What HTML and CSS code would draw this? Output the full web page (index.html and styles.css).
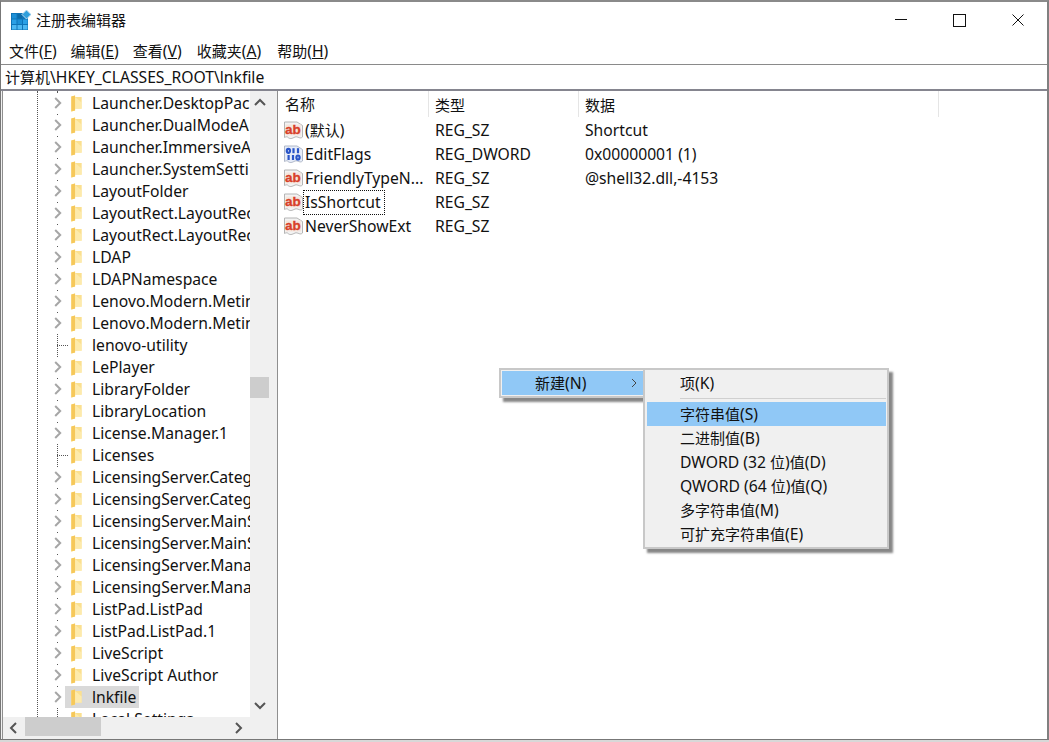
FILE: index.html
```html
<!DOCTYPE html>
<html lang="zh-CN">
<head>
<meta charset="utf-8">
<title>注册表编辑器</title>
<link rel="stylesheet" href="styles.css">
</head>
<body>
<svg class="defs" width="0" height="0">
  <defs>
    <symbol id="folder" viewBox="0 0 13 18">
      <path d="M1 1.5 L5 0.5 L5 2 L12 2 L12 14.5 L5 14.5 L5 16.5 L1 17.5 Z" fill="#fbe08f"/>
      <path d="M1 1.5 L5 0.5 L5 16.5 L1 17.5 Z" fill="#f6c85a"/>
      <path d="M5 2 L5 14.5 L12 14.5 L12 8 Z" fill="#fdeeb8" opacity=".7"/>
    </symbol>
    <symbol id="chev" viewBox="0 0 8 12">
      <path d="M1.2 1 L6.2 6 L1.2 11" fill="none" stroke="#a6a6a6" stroke-width="2"/>
    </symbol>
    <symbol id="ab" viewBox="0 0 19 19">
      <path d="M0.5 1 H13 L18.5 4.5 V16 C16 18.5 14 15 11 16 C8 17.5 6 18.5 3.5 16 C2.5 15.5 1.5 16 0.5 16.5 Z" fill="#f3f3f3" stroke="#b5b5b5"/>
      <rect x="1.5" y="3.5" width="15.5" height="11" fill="#f5e6de"/>
      <text x="9" y="12.5" class="ab-text">ab</text>
    </symbol>
    <symbol id="bin" viewBox="0 0 19 19">
      <path d="M0.5 1 H13 L18.5 4.5 V16 C16 18.5 14 15 11 16 C8 17.5 6 18.5 3.5 16 C2.5 15.5 1.5 16 0.5 16.5 Z" fill="#e6ecf8" stroke="#b0b8c8"/>
      <g fill="none" stroke="#2a55c8" stroke-width="2.2">
        <ellipse cx="4.4" cy="5.8" rx="1.6" ry="2"/>
        <path d="M9.5 3.2 V8.2"/>
        <path d="M14 3.2 V8.2"/>
        <path d="M4.6 10 V15"/>
        <path d="M9 10 V15"/>
        <ellipse cx="14" cy="12.5" rx="1.6" ry="2"/>
      </g>
    </symbol>
  </defs>
</svg>
<div class="window">
  <header class="titlebar">
    <svg class="app-icon" width="20" height="20" viewBox="0 0 20 20">
      <rect x="0" y="3" width="17" height="17" fill="#0e74b8"/>
      <g fill="#1c8fd6">
        <rect x="1" y="4" width="4.5" height="4.5"/><rect x="1" y="9.5" width="4.5" height="4.5" fill="#2aa0e6"/><rect x="1" y="15" width="4.5" height="4.5" fill="#4db8f2"/>
        <rect x="6.5" y="4" width="4.5" height="4.5" fill="#0b6aa8"/><rect x="6.5" y="9.5" width="4.5" height="4.5"/><rect x="6.5" y="15" width="4.5" height="4.5" fill="#4db8f2"/>
        <rect x="12" y="9.5" width="4.5" height="4.5" fill="#2aa0e6"/><rect x="12" y="15" width="4.5" height="4.5" fill="#4db8f2"/>
      </g>
      <path d="M15.5 0 L20 4.5 L15.5 9 L11 4.5 Z" fill="#2f9fdc" stroke="#bcdcf0"/>
    </svg>
    <span class="title">注册表编辑器</span>
    <div class="controls">
      <svg width="12" height="12" viewBox="0 0 12 12"><path d="M0 5.5 H12" stroke="#111" fill="none"/></svg>
      <svg width="13" height="13" viewBox="0 0 13 13"><rect x=".5" y=".5" width="12" height="12" stroke="#111" fill="none"/></svg>
      <svg width="12" height="12" viewBox="0 0 12 12"><path d="M.5 .5 L11.5 11.5 M11.5 .5 L.5 11.5" stroke="#111" fill="none"/></svg>
    </div>
  </header>
  <nav class="menubar">
    <span><span class="z">文件</span>(<u>F</u>)</span><span><span class="z">编辑</span>(<u>E</u>)</span><span><span class="z">查看</span>(<u>V</u>)</span><span class="wide"><span class="z">收藏夹</span>(<u>A</u>)</span><span class="wider"><span class="z">帮助</span>(<u>H</u>)</span>
  </nav>
  <div class="address"><span class="z">计算机</span>\HKEY_CLASSES_ROOT\lnkfile</div>
  <main class="panes">
    <section class="tree">
      <div class="tree-top">
        <div class="tree-view">
          <div class="guide"></div>
          <div class="guide guide-two"></div>
          <div class="row"><svg class="chev"><use href="#chev"/></svg><svg class="fld"><use href="#folder"/></svg><span class="lbl">Launcher.DesktopPac</span></div>
          <div class="row"><svg class="chev"><use href="#chev"/></svg><svg class="fld"><use href="#folder"/></svg><span class="lbl">Launcher.DualModeA</span></div>
          <div class="row"><svg class="chev"><use href="#chev"/></svg><svg class="fld"><use href="#folder"/></svg><span class="lbl">Launcher.ImmersiveA</span></div>
          <div class="row"><svg class="chev"><use href="#chev"/></svg><svg class="fld"><use href="#folder"/></svg><span class="lbl">Launcher.SystemSetti</span></div>
          <div class="row"><svg class="chev"><use href="#chev"/></svg><svg class="fld"><use href="#folder"/></svg><span class="lbl">LayoutFolder</span></div>
          <div class="row"><svg class="chev"><use href="#chev"/></svg><svg class="fld"><use href="#folder"/></svg><span class="lbl">LayoutRect.LayoutRec</span></div>
          <div class="row"><svg class="chev"><use href="#chev"/></svg><svg class="fld"><use href="#folder"/></svg><span class="lbl">LayoutRect.LayoutRec</span></div>
          <div class="row"><svg class="chev"><use href="#chev"/></svg><svg class="fld"><use href="#folder"/></svg><span class="lbl">LDAP</span></div>
          <div class="row"><svg class="chev"><use href="#chev"/></svg><svg class="fld"><use href="#folder"/></svg><span class="lbl">LDAPNamespace</span></div>
          <div class="row"><svg class="chev"><use href="#chev"/></svg><svg class="fld"><use href="#folder"/></svg><span class="lbl">Lenovo.Modern.Metin</span></div>
          <div class="row"><svg class="chev"><use href="#chev"/></svg><svg class="fld"><use href="#folder"/></svg><span class="lbl">Lenovo.Modern.Metin</span></div>
          <div class="row"><span class="leaf"></span><svg class="fld"><use href="#folder"/></svg><span class="lbl">lenovo-utility</span></div>
          <div class="row"><svg class="chev"><use href="#chev"/></svg><svg class="fld"><use href="#folder"/></svg><span class="lbl">LePlayer</span></div>
          <div class="row"><svg class="chev"><use href="#chev"/></svg><svg class="fld"><use href="#folder"/></svg><span class="lbl">LibraryFolder</span></div>
          <div class="row"><svg class="chev"><use href="#chev"/></svg><svg class="fld"><use href="#folder"/></svg><span class="lbl">LibraryLocation</span></div>
          <div class="row"><svg class="chev"><use href="#chev"/></svg><svg class="fld"><use href="#folder"/></svg><span class="lbl">License.Manager.1</span></div>
          <div class="row"><span class="leaf"></span><svg class="fld"><use href="#folder"/></svg><span class="lbl">Licenses</span></div>
          <div class="row"><svg class="chev"><use href="#chev"/></svg><svg class="fld"><use href="#folder"/></svg><span class="lbl">LicensingServer.Categ</span></div>
          <div class="row"><svg class="chev"><use href="#chev"/></svg><svg class="fld"><use href="#folder"/></svg><span class="lbl">LicensingServer.Categ</span></div>
          <div class="row"><svg class="chev"><use href="#chev"/></svg><svg class="fld"><use href="#folder"/></svg><span class="lbl">LicensingServer.MainS</span></div>
          <div class="row"><svg class="chev"><use href="#chev"/></svg><svg class="fld"><use href="#folder"/></svg><span class="lbl">LicensingServer.MainS</span></div>
          <div class="row"><svg class="chev"><use href="#chev"/></svg><svg class="fld"><use href="#folder"/></svg><span class="lbl">LicensingServer.Mana</span></div>
          <div class="row"><svg class="chev"><use href="#chev"/></svg><svg class="fld"><use href="#folder"/></svg><span class="lbl">LicensingServer.Mana</span></div>
          <div class="row"><svg class="chev"><use href="#chev"/></svg><svg class="fld"><use href="#folder"/></svg><span class="lbl">ListPad.ListPad</span></div>
          <div class="row"><svg class="chev"><use href="#chev"/></svg><svg class="fld"><use href="#folder"/></svg><span class="lbl">ListPad.ListPad.1</span></div>
          <div class="row"><svg class="chev"><use href="#chev"/></svg><svg class="fld"><use href="#folder"/></svg><span class="lbl">LiveScript</span></div>
          <div class="row"><svg class="chev"><use href="#chev"/></svg><svg class="fld"><use href="#folder"/></svg><span class="lbl">LiveScript Author</span></div>
          <div class="row sel-row"><svg class="chev"><use href="#chev"/></svg><svg class="fld"><use href="#folder"/></svg><span class="lbl selected">lnkfile</span></div>
          <div class="row"><svg class="fld"><use href="#folder"/></svg><span class="lbl">Local Settings</span></div>
        </div>
        <div class="vscroll">
          <svg class="arrow" width="14" height="9" viewBox="0 0 14 9"><path d="M2 7 L7 2 L12 7" fill="none" stroke="#555" stroke-width="2"/></svg>
          <div class="vtrack"><div class="vthumb"></div></div>
          <svg class="arrow" width="14" height="9" viewBox="0 0 14 9"><path d="M2 2 L7 7 L12 2" fill="none" stroke="#555" stroke-width="2"/></svg>
        </div>
      </div>
      <div class="hscroll">
        <svg width="9" height="14" viewBox="0 0 9 14"><path d="M7 2 L2 7 L7 12" fill="none" stroke="#555" stroke-width="2"/></svg>
        <div class="htrack"><div class="hthumb"></div></div>
        <svg width="9" height="14" viewBox="0 0 9 14"><path d="M2 2 L7 7 L2 12" fill="none" stroke="#555" stroke-width="2"/></svg>
      </div>
    </section>
    <section class="list">
      <div class="list-head">
        <span class="c1 z">名称</span><span class="c2 z">类型</span><span class="c3 z">数据</span>
      </div>
      <div class="list-row"><span class="c1"><svg class="vi"><use href="#ab"/></svg><span class="nm">(<span class="z">默认</span>)</span></span><span class="c2">REG_SZ</span><span class="c3">Shortcut</span></div>
      <div class="list-row"><span class="c1"><svg class="vi"><use href="#bin"/></svg><span class="nm">EditFlags</span></span><span class="c2">REG_DWORD</span><span class="c3">0x00000001 (1)</span></div>
      <div class="list-row"><span class="c1"><svg class="vi"><use href="#ab"/></svg><span class="nm">FriendlyTypeN...</span></span><span class="c2">REG_SZ</span><span class="c3">@shell32.dll,-4153</span></div>
      <div class="list-row"><span class="c1"><svg class="vi"><use href="#ab"/></svg><span class="nm focus">IsShortcut</span></span><span class="c2">REG_SZ</span><span class="c3"></span></div>
      <div class="list-row"><span class="c1"><svg class="vi"><use href="#ab"/></svg><span class="nm">NeverShowExt</span></span><span class="c2">REG_SZ</span><span class="c3"></span></div>
    </section>
  </main>
</div>
<div class="menu menu-parent">
  <div class="mi parent-item"><span><span class="z">新建</span>(N)</span><svg width="6" height="10" viewBox="0 0 6 10"><path d="M1 1 L5 5 L1 9" fill="none" stroke="#444"/></svg></div>
</div>
<div class="menu menu-sub">
  <div class="mi first"><span class="z">项</span>(K)</div>
  <div class="sep"></div>
  <div class="mi hi"><span class="z">字符串值</span>(S)</div>
  <div class="mi"><span class="z">二进制值</span>(B)</div>
  <div class="mi">DWORD (32 <span class="z">位</span>)<span class="z">值</span>(D)</div>
  <div class="mi">QWORD (64 <span class="z">位</span>)<span class="z">值</span>(Q)</div>
  <div class="mi"><span class="z">多字符串值</span>(M)</div>
  <div class="mi"><span class="z">可扩充字符串值</span>(E)</div>
</div>
</body>
</html>
```
FILE: styles.css
```css
* { box-sizing: border-box; }
html, body { margin: 0; padding: 0; height: 742px; overflow: hidden; }
body {
  background: #d8d8d8;
  font-family: "Noto Sans", "Noto Sans CJK SC", sans-serif;
  font-size: 15.7px;
  color: #111;
}
.z { font-size: 15px; }
.defs { position: absolute; }
.ab-text {
  font-family: "Liberation Sans", sans-serif;
  font-weight: 700;
  font-size: 13.5px;
  fill: #d8402a;
  stroke: #d8402a;
  stroke-width: .3px;
  text-anchor: middle;
}
.window {
  width: 1049px;
  height: 740px;
  border: 1px solid #777;
  border-top: 2px solid #8a8a8a;
  border-right: 2px solid #808080;
  background: #fff;
  display: flex;
  flex-direction: column;
}
.titlebar {
  height: 38px;
  display: flex;
  align-items: center;
  padding: 0 0 4px 10px;
  flex: none;
}
.app-icon { flex: none; margin-top: 2px; }
.title { margin-left: 5px; font-size: 15px; }
.controls {
  margin-left: auto;
  margin-top: 2px;
  display: flex;
  align-items: center;
  gap: 46px;
  padding-right: 23px;
}
.menubar {
  height: 24px;
  display: flex;
  align-items: flex-start;
  gap: 14px;
  padding-left: 8px;
  flex: none;
  line-height: 23px;
}
.wide { margin-left: 1px; }
.wider { margin-left: 2px; }
.address {
  height: 25px;
  border-top: 1px solid #8a8a8a;
  padding-left: 4px;
  line-height: 24px;
  flex: none;
  white-space: nowrap;
}
.panes {
  flex: 1;
  min-height: 0;
  display: flex;
  border-top: 2px solid #85858f;
  background: #f0f0f0;
}
.tree {
  width: 268px;
  margin-left: 1px;
  display: flex;
  flex-direction: column;
  background: #f0f0f0;
  border-left: 1px solid #8f8f8f;
  flex: none;
}
.tree-top { height: 626px; display: flex; flex: none; }
.tree-view {
  position: relative;
  width: 247px;
  padding-top: 1px;
  overflow: hidden;
  background: #fff;
  flex: none;
}
.guide {
  position: absolute;
  left: 34px;
  top: 0;
  bottom: 0;
  border-left: 1px dotted #555;
}
.guide-two { left: 54px; }
.row {
  height: 22px;
  display: flex;
  align-items: center;
  white-space: nowrap;
  position: relative;
}
.row:has(.chev)::after {
  content: "";
  position: absolute;
  left: 50px;
  top: 1px;
  width: 11px;
  height: 20px;
  background: #fff;
}
.sel-row::before {
  content: "";
  position: absolute;
  left: 62px;
  top: 0;
  width: 25px;
  height: 22px;
  background: #d9d9d9;
}
.chev { position: absolute; z-index: 1; left: 51px; top: 5px; width: 8px; height: 12px; }
.leaf {
  position: absolute;
  left: 54px;
  top: 11px;
  width: 11px;
  border-top: 1px dotted #555;
}
.fld { position: absolute; z-index: 1; left: 67px; top: 3px; width: 13px; height: 17px; }
.lbl { position: absolute; z-index: 1; left: 87px; top: 0; line-height: 22px; padding: 0 2px; }
.selected { background: #d9d9d9; padding-right: 3px; }
.vscroll {
  width: 20px;
  background: #f0f0f0;
  display: flex;
  flex-direction: column;
  align-items: center;
  padding: 7px 0 7px;
  flex: none;
}
.vtrack { flex: 1; width: 100%; padding-top: 270px; }
.vthumb { height: 21px; width: 19px; background: #cdcdcd; }
.arrow { flex: none; }
.hscroll {
  height: 21px;
  display: flex;
  align-items: center;
  padding: 0 3px 0 6px;
  flex: none;
  gap: 7px;
  width: 247px;
}
.htrack { width: 202px; height: 100%; }
.hthumb { width: 76px; height: 19px; background: #cdcdcd; }
.list {
  flex: 1;
  margin-left: 7px;
  background: #fff;
  border-left: 1px solid #8f8f8f;
}
.list-head {
  height: 27px;
  display: flex;
  align-items: flex-start;
}
.list-head .c1, .list-head .c2, .list-head .c3 {
  height: 26px;
  line-height: 28px;
  border-right: 1px solid #e5e5e5;
}
.list-row { height: 24px; display: flex; align-items: center; line-height: 24px; white-space: nowrap; }
.c1 { width: 150px; padding-left: 6px; display: flex; align-items: center; flex: none; }
.list-head .c1 { width: 151px; padding-left: 7px; }
.c2 { width: 150px; padding-left: 7px; flex: none; }
.list-head .c2 { padding-left: 6px; }
.c3 { width: 360px; padding-left: 7px; flex: none; }
.list-head .c3 { padding-left: 6px; }
.vi { width: 19px; height: 19px; flex: none; }
.nm { margin-left: 2px; }
.focus { outline: 1px dotted #111; margin-left: 1px; padding: 0 3px 0 1px; height: 23px; line-height: 23px; }
.menu {
  position: absolute;
  box-shadow: 4px 4px 2px rgba(70, 70, 70, .65);
  border: 2px solid #c8c8c8;
}
.menu-parent {
  left: 499px;
  top: 368px;
  width: 146px;
  height: 30px;
  background: #f0f0f0;
  padding: 1px 0 1px 1px;
}
.parent-item {
  background: #90c8f6;
  height: 24px;
  display: flex;
  align-items: center;
  justify-content: space-between;
  padding: 0 6px 0 33px;
}
.menu-sub {
  left: 643px;
  top: 368px;
  width: 246px;
  height: 181px;
  background: #f0f0f0;
  padding: 2px 1px 2px 2px;
}
.mi { height: 24px; line-height: 25px; padding-left: 33px; white-space: nowrap; }
.first { line-height: 23px; }
.sep { height: 1px; margin: 2px 0 3px 33px; background: #d0d0d0; }
.hi { background: #90c8f6; }
```
